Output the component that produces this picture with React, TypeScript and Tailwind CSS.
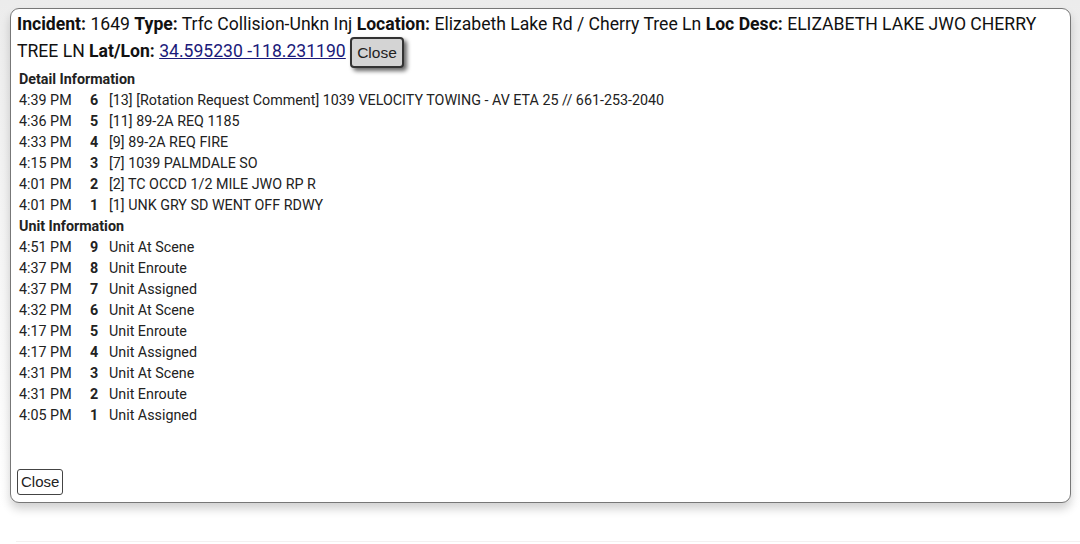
import React from "react";

const details = [
  ["4:39 PM", "6", "[13] [Rotation Request Comment] 1039 VELOCITY TOWING - AV ETA 25 // 661-253-2040"],
  ["4:36 PM", "5", "[11] 89-2A REQ 1185"],
  ["4:33 PM", "4", "[9] 89-2A REQ FIRE"],
  ["4:15 PM", "3", "[7] 1039 PALMDALE SO"],
  ["4:01 PM", "2", "[2] TC OCCD 1/2 MILE JWO RP R"],
  ["4:01 PM", "1", "[1] UNK GRY SD WENT OFF RDWY"],
];

const units = [
  ["4:51 PM", "9", "Unit At Scene"],
  ["4:37 PM", "8", "Unit Enroute"],
  ["4:37 PM", "7", "Unit Assigned"],
  ["4:32 PM", "6", "Unit At Scene"],
  ["4:17 PM", "5", "Unit Enroute"],
  ["4:17 PM", "4", "Unit Assigned"],
  ["4:31 PM", "3", "Unit At Scene"],
  ["4:31 PM", "2", "Unit Enroute"],
  ["4:05 PM", "1", "Unit Assigned"],
];

function Rows({ rows }: { rows: string[][] }) {
  return (
    <div className="flex flex-col">
      {rows.map((r, i) => (
        <div key={i} className="flex h-[21px] items-center">
          <span className="w-[71px]">{r[0]}</span>
          <span className="w-[19px] font-bold">{r[1]}</span>
          <span>{r[2]}</span>
        </div>
      ))}
    </div>
  );
}

export default function App() {
  return (
    <div className="w-[1080px] h-[544px] bg-white overflow-hidden text-[#222]" style={{ fontFamily: "Roboto, 'Liberation Sans', sans-serif" }}>
      <div className="bg-gradient-to-b from-[#ececec] to-white pt-[8px] px-[10px] pb-[8px]">
        <div className="w-[1061px] h-[495px] bg-white border border-[#777] rounded-[9px] shadow-[0_6px_10px_rgba(0,0,0,0.18)] px-[6px] pt-[2px] flex flex-col">
          <div className="text-[17.6px] leading-[26px] text-[#111]">
            <b>Incident:</b> 1649 <b>Type:</b> Trfc Collision-Unkn Inj <b>Location:</b> Elizabeth Lake Rd / Cherry Tree Ln <b>Loc Desc:</b> ELIZABETH LAKE JWO CHERRY TREE LN <b>Lat/Lon:</b>{" "}
            <a className="underline text-[#1a1a7a]">34.595230 -118.231190</a>{" "}
            <button className="align-[-1px] h-[31px] px-[5px] bg-[#d4d4d4] border-2 border-[#333] rounded-[4px] text-[15.5px] text-[#222] shadow-[3px_3px_4px_rgba(0,0,0,0.6)]" style={{ fontFamily: "'Liberation Sans', Arial, sans-serif" }}>Close</button>
          </div>
          <div className="text-[14.3px] px-[2px] mt-[1px]">
            <div className="font-bold h-[21px] flex items-center">Detail Information</div>
            <Rows rows={details} />
            <div className="font-bold h-[21px] flex items-center">Unit Information</div>
            <Rows rows={units} />
          </div>
          <div className="mt-auto mb-[7px]">
            <button className="h-[26px] px-[3px] bg-white border border-[#444] rounded-[3px] text-[15px] text-[#222]" style={{ fontFamily: "'Liberation Sans', Arial, sans-serif" }}>Close</button>
          </div>
        </div>
      </div>
      <div className="ml-[16px] border-t border-[#f4f0f0] mt-[30px]"></div>
    </div>
  );
}
